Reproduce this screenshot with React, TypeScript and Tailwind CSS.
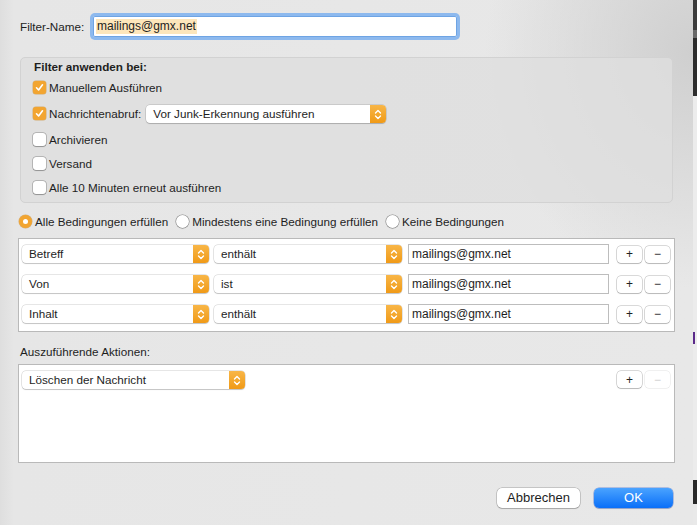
import React from "react";

const font = { fontFamily: '"Liberation Sans", Arial, sans-serif' };

function Stepper() {
  return (
    <span className="flex w-[16px] shrink-0 items-center justify-center rounded-r-[4px] bg-[linear-gradient(#f8b647,#f09a17)]">
      <svg width="8" height="11" viewBox="0 0 8 11" fill="none" stroke="white" strokeWidth="1.4" strokeLinecap="round" strokeLinejoin="round">
        <path d="M1.5 4 L4 1.5 L6.5 4" />
        <path d="M1.5 7 L4 9.5 L6.5 7" />
      </svg>
    </span>
  );
}

function Select({ label, w }: { label: string; w: string }) {
  return (
    <div className={`flex h-[18px] ${w} shrink-0 rounded-[4px] bg-white shadow-[0_0_0_0.5px_rgba(0,0,0,0.2),0_1px_1px_rgba(0,0,0,0.15)]`}>
      <span className="flex-1 truncate pl-[7px] text-[11.7px] leading-[18px] text-[#1e1e1e]">{label}</span>
      <Stepper />
    </div>
  );
}

function Check({ on, label }: { on?: boolean; label: string }) {
  return (
    <div className="flex items-center gap-[3px]">
      {on ? (
        <span className="flex h-[13px] w-[13px] items-center justify-center rounded-[3px] bg-[#f2a531] shadow-[0_0_0_0.5px_rgba(200,120,0,0.5)]">
          <svg width="9" height="9" viewBox="0 0 9 9" fill="none" stroke="white" strokeWidth="1.6" strokeLinecap="round" strokeLinejoin="round">
            <path d="M1.5 4.8 L3.6 7 L7.5 1.8" />
          </svg>
        </span>
      ) : (
        <span className="h-[13px] w-[13px] rounded-[3px] bg-white shadow-[0_0_0_0.5px_rgba(0,0,0,0.35),0_0.5px_1px_rgba(0,0,0,0.2)]" />
      )}
      <span className="text-[11.7px] text-[#1e1e1e]">{label}</span>
    </div>
  );
}

function Radio({ on, label }: { on?: boolean; label: string }) {
  return (
    <div className="flex items-center gap-[3px]">
      {on ? (
        <span className="flex h-[13px] w-[13px] items-center justify-center rounded-full bg-[#f2a531] shadow-[0_0_0_0.5px_rgba(200,120,0,0.5)]">
          <span className="h-[5px] w-[5px] rounded-full bg-white" />
        </span>
      ) : (
        <span className="h-[13px] w-[13px] rounded-full bg-white shadow-[0_0_0_0.5px_rgba(0,0,0,0.4),0_0.5px_1px_rgba(0,0,0,0.2)]" />
      )}
      <span className="text-[11.7px] text-[#1e1e1e]">{label}</span>
    </div>
  );
}

function SmallBtn({ children, disabled }: { children: React.ReactNode; disabled?: boolean }) {
  return (
    <div
      className={`flex h-[17px] w-[25px] items-center justify-center rounded-[4px] bg-white text-[12px] leading-none ${
        disabled
          ? "text-[#cfcfcf] shadow-[0_0_0_0.5px_rgba(0,0,0,0.12)]"
          : "text-[#222] shadow-[0_0_0_0.5px_rgba(0,0,0,0.3),0_1px_1px_rgba(0,0,0,0.15)]"
      }`}
    >
      {children}
    </div>
  );
}

const rows = [
  { field: "Betreff", op: "enthält" },
  { field: "Von", op: "ist" },
  { field: "Inhalt", op: "enthält" },
];

export default function App() {
  return (
    <div className="flex h-[525px] w-[697px] overflow-hidden" style={font}>
      <div className="flex w-[693px] flex-col bg-[radial-gradient(ellipse_30%_45%_at_100%_10%,#cfcfcf,transparent),linear-gradient(to_right,#dedede,#e6e6e6_2%,#e8e8e8)] px-[20px] pt-[16px]">
        {/* name */}
        <div className="flex h-[21px] items-center">
          <span className="w-[73px] text-[11.7px] text-[#1e1e1e]">Filter-Name:</span>
          <div className="flex h-[21px] w-[364px] items-center rounded-[2px] bg-white pl-[3px] shadow-[0_0_0_3px_#8db9ee,inset_0_0_0_1px_#6ea4e4]">
            <span className="bg-[#fde6bb] px-[1px] text-[12px] leading-[15px] text-[#1e1e1e]">mailings@gmx.net</span>
          </div>
        </div>

        {/* group */}
        <div className="mt-[20px] flex h-[146px] flex-col rounded-[5px] border border-[#d2d2d2] bg-[#dedede]/80 pl-[12px] pt-[1px]">
          <div className="h-[16px] pl-[1px] text-[11.7px] leading-[16px] font-bold text-[#1e1e1e]">Filter anwenden bei:</div>
          <div className="mt-[4px] flex h-[18px] items-center">
            <Check on label="Manuellem Ausführen" />
          </div>
          <div className="mt-[8px] flex h-[18px] items-center gap-[5px]">
            <Check on label="Nachrichtenabruf:" />
            <Select label="Vor Junk-Erkennung ausführen" w="w-[240px]" />
          </div>
          <div className="mt-[8px] flex h-[18px] items-center">
            <Check label="Archivieren" />
          </div>
          <div className="mt-[6px] flex h-[18px] items-center">
            <Check label="Versand" />
          </div>
          <div className="mt-[6px] flex h-[18px] items-center">
            <Check label="Alle 10 Minuten erneut ausführen" />
          </div>
        </div>

        {/* radios */}
        <div className="-ml-[1px] mt-[10px] flex h-[18px] items-center gap-[8px]">
          <Radio on label="Alle Bedingungen erfüllen" />
          <Radio label="Mindestens eine Bedingung erfüllen" />
          <Radio label="Keine Bedingungen" />
        </div>

        {/* conditions */}
        <div className="-mx-[2px] mt-[7px] flex h-[94px] flex-col border border-[#b9b9b9] bg-white pl-[3px]">
          {rows.map((r) => (
            <div key={r.field} className="flex h-[30px] items-center">
              <Select label={r.field} w="w-[187px]" />
              <div className="ml-[5px]">
                <Select label={r.op} w="w-[188px]" />
              </div>
              <div className="ml-[6px] flex h-[20px] w-[201px] items-center border border-[#bdbdbd] pl-[3px] text-[12px] text-[#1e1e1e]">
                mailings@gmx.net
              </div>
              <div className="ml-[8px] flex gap-[3px]">
                <SmallBtn>+</SmallBtn>
                <SmallBtn>−</SmallBtn>
              </div>
            </div>
          ))}
        </div>

        {/* actions */}
        <div className="mt-[12px] h-[16px] text-[11.7px] leading-[16px] text-[#1e1e1e]">Auszuführende Aktionen:</div>
        <div className="-mx-[2px] mt-[4px] flex h-[99px] items-start justify-between border border-[#b9b9b9] bg-white pl-[3px] pr-[4px] pt-[6px]">
          <Select label="Löschen der Nachricht" w="w-[223px]" />
          <div className="flex gap-[3px]">
            <SmallBtn>+</SmallBtn>
            <SmallBtn disabled>−</SmallBtn>
          </div>
        </div>

        {/* footer */}
        <div className="mt-[25px] flex justify-end gap-[14px]">
          <div className="flex h-[20px] w-[83px] items-center justify-center rounded-[5px] bg-white text-[13px] text-[#1e1e1e] shadow-[0_0_0_0.5px_rgba(0,0,0,0.3),0_1px_1px_rgba(0,0,0,0.15)]">
            Abbrechen
          </div>
          <div className="flex h-[20px] w-[79px] items-center justify-center rounded-[5px] bg-[linear-gradient(#4aa3ff,#0a6ff8)] text-[13px] text-white shadow-[0_0_0_0.5px_rgba(0,60,200,0.5),0_1px_1px_rgba(0,0,0,0.15)]">
            OK
          </div>
        </div>
      </div>

      {/* background behind the sheet */}
      <div className="flex w-[4px] flex-col">
        <div className="h-[30px] bg-[#3b3b3b]" />
        <div className="h-[8px] bg-[#6a6a6a]" />
        <div className="h-[58px] bg-[#2c2c2c]" />
        <div className="flex h-[384px] flex-col bg-[#ececec]">
          <div className="mt-[236px] h-[12px] w-[2px] bg-[#5b2a8a]" />
        </div>
        <div className="h-[24px] bg-[#2a2a2a]" />
        <div className="flex-1 bg-[#e9e9e9]" />
      </div>
    </div>
  );
}
